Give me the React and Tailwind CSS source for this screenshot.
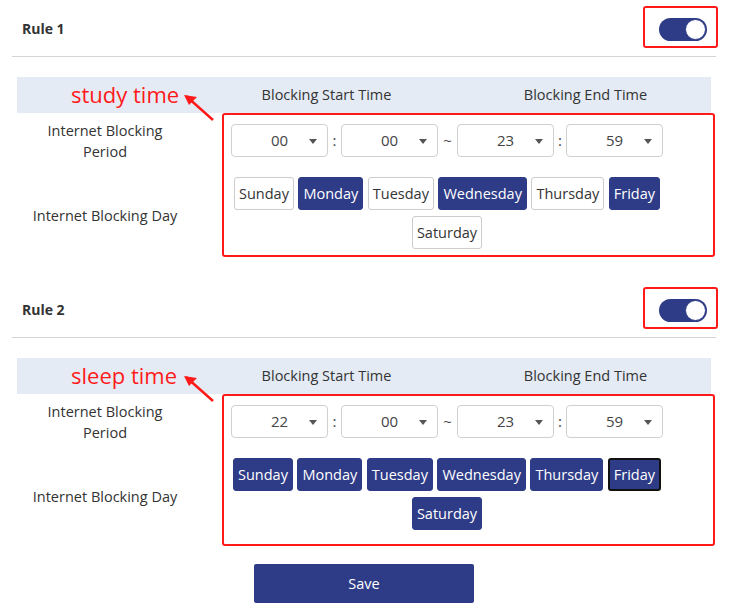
import { useState } from 'react';

const DAYS = ['Sunday', 'Monday', 'Tuesday', 'Wednesday', 'Thursday', 'Friday', 'Saturday'];

const RULES = [
  { name: 'Rule 1', note: 'study time', start: ['00', '00'], end: ['23', '59'], days: [1, 3, 5], focus: -1, pb: 'pb-[6px]' },
  { name: 'Rule 2', note: 'sleep time', start: ['22', '00'], end: ['23', '59'], days: [0, 1, 2, 3, 4, 5, 6], focus: 5, pb: 'pb-[14px]' },
];

const TimeSelect = ({ value }) => (
  <div className="relative w-[97px] h-[33px] border border-[#d0d0d0] rounded-[4px] bg-white flex items-center">
    <span className="w-full text-center text-[15px] text-[#444]">{value}</span>
    <svg className="absolute right-[10px] top-[14px]" width="8" height="5" viewBox="0 0 8 5">
      <path d="M0 0h8L4 5z" fill="#555" />
    </svg>
  </div>
);

const Toggle = () => (
  <div className="border-2 border-[#ff1a1a] rounded-[3px] w-[75px] h-[42px] flex items-start justify-end pt-[10px] pr-[9px]">
    <div className="w-[48px] h-[23px] rounded-full bg-[#2e3b87] flex items-center justify-end pr-[1px]">
      <div className="w-[21px] h-[21px] rounded-full bg-white border border-[#2e3b87]" />
    </div>
  </div>
);

const Rule = ({ rule, first }) => {
  const [days, setDays] = useState(rule.days);
  const toggleDay = (i) => setDays(days.includes(i) ? days.filter((d) => d !== i) : [...days, i]);

  return (
    <div className={first ? '' : 'mt-[24px]'}>
      {/* header */}
      <div className="ml-3 mr-5 h-[57px] border-b border-[#d4d4d4] flex items-center justify-between pl-[10px]">
        <span className="font-bold text-[14px] text-[#333]">{rule.name}</span>
        <div className="mr-[-2px] mt-[-3px]">
          <Toggle />
        </div>
      </div>

      <div className="relative ml-[17px] mr-[25px] mt-[20px]">
        {/* band */}
        <div className="h-[36px] bg-[#e4ebf5] grid grid-cols-[176px_1fr_1fr] items-center text-[14.5px] text-[#333]">
          <span />
          <span className="text-center pl-[8px]">Blocking Start Time</span>
          <span className="text-center pl-[8px]">Blocking End Time</span>
        </div>

        {/* annotation */}
        <span className="absolute left-[54px] top-[3px] text-[22px] leading-[28px] text-[#ff1a1a]">{rule.note}</span>
        <svg className="absolute left-[166px] top-[16px]" width="36" height="30" viewBox="0 0 36 30">
          <path d="M3 3 L30 27" stroke="#ff1a1a" strokeWidth="2.5" />
          <path d="M1 2 L14 4 L6 12 Z" fill="#ff1a1a" />
        </svg>

        <div className="flex">
          <div className="w-[176px] shrink-0 text-[14.5px] text-[#333] text-center leading-[21px]">
            <div className="pt-[7px] h-[63px]">Internet Blocking<br />Period</div>
            <div className="pt-[29px]">Internet Blocking Day</div>
          </div>

          <div className={`ml-[29px] mr-[-4px] flex-1 border-2 border-[#ff1a1a] rounded-[3px] pl-[7px] pr-[50px] pt-[9px] ${rule.pb}`}>
            <div className="flex items-center">
              <TimeSelect value={rule.start[0]} />
              <span className="w-[13px] text-center text-[15px] text-[#444]">:</span>
              <TimeSelect value={rule.start[1]} />
              <span className="w-[19px] text-center text-[15px] text-[#444]">~</span>
              <TimeSelect value={rule.end[0]} />
              <span className="w-[12px] text-center text-[15px] text-[#444]">:</span>
              <TimeSelect value={rule.end[1]} />
            </div>
            <div className="mt-[20px] flex flex-wrap justify-center gap-x-[4.5px] gap-y-[6px]">
              {DAYS.map((d, i) => {
                const on = days.includes(i);
                return (
                  <button key={d} type="button" onClick={() => toggleDay(i)}
                    className={`h-[33px] px-[4px] rounded-[3px] text-[14.5px] border ${
                      on ? 'bg-[#2e3b87] text-white' : 'bg-white text-[#333] border-[#ccc]'
                    } ${on ? (rule.focus === i ? 'border-2 border-[#111]' : 'border-[#2e3b87]') : ''}`}>
                    {d}
                  </button>
                );
              })}
            </div>
          </div>
        </div>
      </div>
    </div>
  );
};

const App = () => {
  return (
    <div className="w-[736px] h-[613px] bg-white overflow-hidden font-['Open_Sans',sans-serif]">
      {RULES.map((r, i) => <Rule key={r.name} rule={r} first={i === 0} />)}
      <div className="mt-[18px] ml-[254px]">
        <button type="button" className="w-[220px] h-[39px] bg-[#2e3b87] text-white text-[14.5px] rounded-[2px]">Save</button>
      </div>
    </div>
  );
};

export default App;
